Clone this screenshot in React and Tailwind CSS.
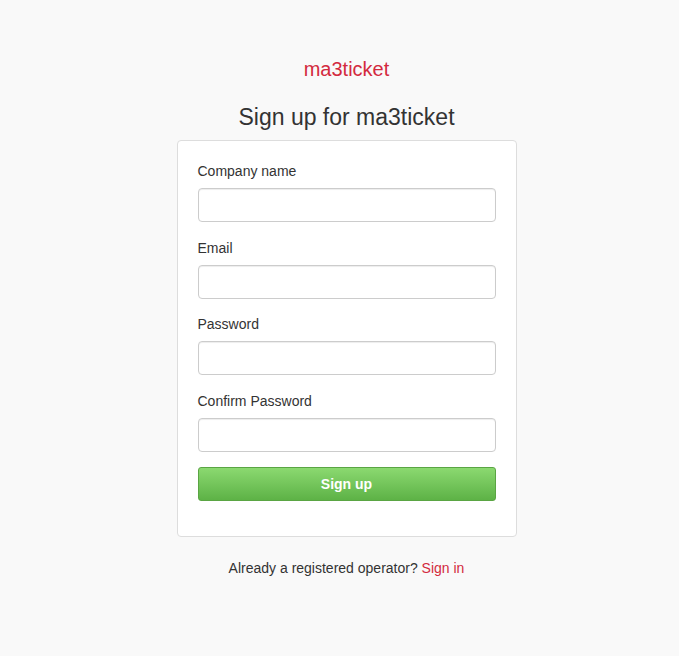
import React from "react";

function Field({ label, type = "text", mb = "mb-[16px]" }) {
  return (
    <div className={mb}>
      <label className="block mb-[7px] text-[14px] leading-[20px] text-[#333]">{label}</label>
      <input
        type={type}
        className="block w-full h-[34px] px-3 rounded-[4px] border border-[#ccc] bg-white shadow-[inset_0_1px_1px_rgba(0,0,0,0.075)] outline-none"
      />
    </div>
  );
}

export default function App() {
  return (
    <div
      className="min-h-[656px] bg-[#f9f9f9] flex flex-col items-center pt-[55px] pl-[14px] text-[#333]"
      style={{ fontFamily: '"Liberation Sans", Arial, sans-serif' }}
    >
      <div className="text-[20px] leading-[28px] text-[#d32a3e]">ma3ticket</div>
      <h1 className="mt-[21px] text-[23px] leading-[26px] text-[#333]">Sign up for ma3ticket</h1>
      <div className="mt-[10px] w-[340px] bg-white border border-[#ddd] rounded-[4px] px-[20px] pt-[20px] pb-[35px]">
        <Field label="Company name" />
        <Field label="Email" type="email" mb="mb-[15px]" />
        <Field label="Password" type="password" />
        <Field label="Confirm Password" type="password" mb="mb-[15px]" />
        <button
          className="block w-full h-[34px] rounded-[3px] border border-[#5aa543] bg-gradient-to-b from-[#8bd970] to-[#5db246] text-white font-bold text-[14px]"
        >
          Sign up
        </button>
      </div>
      <div className="mt-[21px] text-[14px] leading-[20px] text-[#333]">
        Already a registered operator? <a className="text-[#d32a3e]" href="#">Sign in</a>
      </div>
    </div>
  );
}
